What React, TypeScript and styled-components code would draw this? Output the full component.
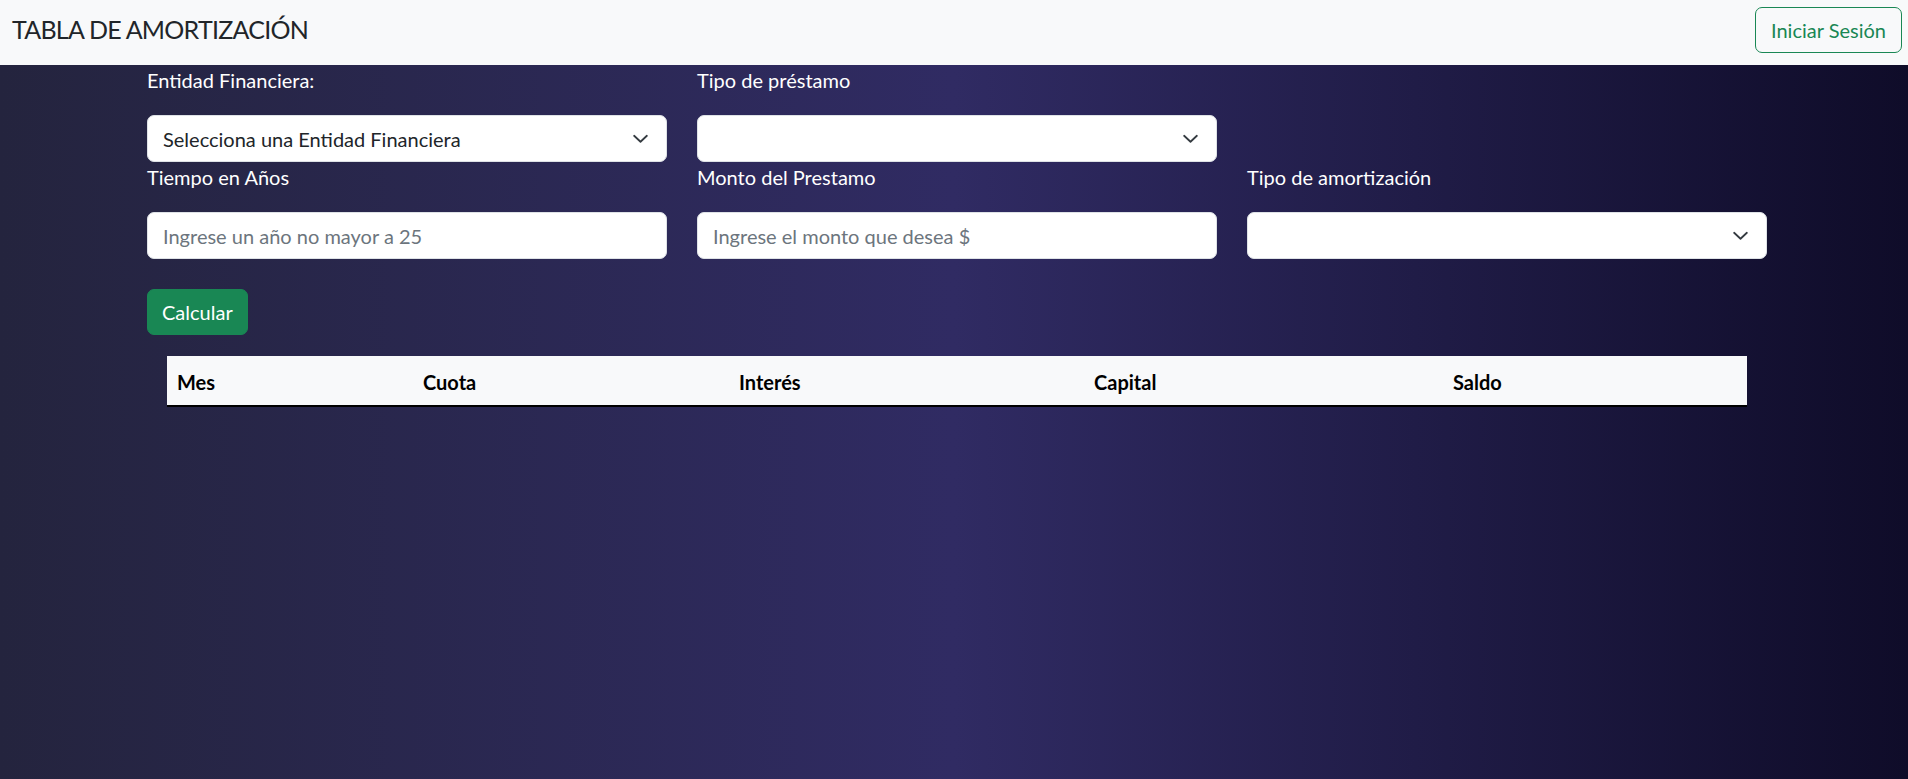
import React from "react";
import styled, { createGlobalStyle } from "styled-components";

const GlobalStyle = createGlobalStyle`
  html, body { margin: 0; padding: 0; }
  body {
    font-family: Lato, "Noto Sans", "Liberation Sans", sans-serif;
    font-size: 20px;
    line-height: 1.5;
    color: #212529;
    background: #0f0c29;
  }
  * { box-sizing: border-box; }
`;

const Navbar = styled.header`
  height: 65px;
  background: #f8f9fa;
  display: flex;
  align-items: center;
  justify-content: space-between;
  padding: 0 6px 5px 12px;
`;

const Brand = styled.div`
  font-size: 25px;
  line-height: 1.5;
  letter-spacing: -0.75px;
  color: #212529;
`;

const OutlineButton = styled.button`
  height: 46px;
  padding: 0 15px;
  border: 1px solid #198754;
  border-radius: 7px;
  background: transparent;
  color: #198754;
  font-family: inherit;
  font-size: 20px;
`;

const Main = styled.main`
  min-height: 714px;
  background: linear-gradient(to right, #24243e, #302b63, #0f0c29);
`;

const Container = styled.div`
  width: 1620px;
  margin-left: 147px;
`;

const Row = styled.div`
  display: grid;
  grid-template-columns: repeat(3, 520px);
  column-gap: 30px;
`;

const Field = styled.div`
  display: flex;
  flex-direction: column;
`;

const Label = styled.label`
  color: #ffffff;
  line-height: 30px;
  height: 30px;
  margin-bottom: 20px;
`;

const Control = styled.div<{ $placeholder?: boolean }>`
  height: 47px;
  background: #ffffff;
  border: 1px solid #dee2e6;
  border-radius: 7px;
  padding: 0 15px;
  display: flex;
  align-items: center;
  justify-content: space-between;
  color: ${(p) => (p.$placeholder ? "#6c757d" : "#212529")};
`;

const Chevron = styled.svg`
  width: 17px;
  height: 13px;
  flex: none;
  margin-right: 2px;
`;

const PrimaryButton = styled.button`
  margin-top: 30px;
  height: 46px;
  padding: 0 14px;
  border: 1px solid #198754;
  border-radius: 7px;
  background: #198754;
  color: #ffffff;
  font-family: inherit;
  font-size: 20px;
`;

const Table = styled.table`
  margin: 21px 0 0 20px;
  width: 1580px;
  border-collapse: collapse;
  background: #f8f9fa;
`;

const Th = styled.th<{ $w: number }>`
  width: ${(p) => p.$w}px;
  text-align: left;
  font-weight: 700;
  color: #000000;
  padding: 12px 10px 9px;
  line-height: 28px;
  border-bottom: 2px solid #000000;
`;

const ChevronIcon = () => (
  <Chevron viewBox="0 0 16 12" preserveAspectRatio="none">
    <path
      fill="none"
      stroke="#343a40"
      strokeLinecap="round"
      strokeLinejoin="round"
      strokeWidth="1.7"
      d="m2 3.5 6 5.5 6-5.5"
    />
  </Chevron>
);

const Select = ({ value }: { value?: string }) => (
  <Control>
    <span>{value ?? ""}</span>
    <ChevronIcon />
  </Control>
);

const Input = ({ placeholder }: { placeholder: string }) => (
  <Control $placeholder>
    <span>{placeholder}</span>
  </Control>
);

const columns: [string, number][] = [
  ["Mes", 246],
  ["Cuota", 316],
  ["Interés", 355],
  ["Capital", 359],
  ["Saldo", 304],
];

export default function App() {
  return (
    <>
      <GlobalStyle />
      <Navbar>
        <Brand>TABLA DE AMORTIZACIÓN</Brand>
        <OutlineButton>Iniciar Sesión</OutlineButton>
      </Navbar>
      <Main>
        <Container>
          <Row>
            <Field>
              <Label>Entidad Financiera:</Label>
              <Select value="Selecciona una Entidad Financiera" />
            </Field>
            <Field>
              <Label>Tipo de préstamo</Label>
              <Select />
            </Field>
          </Row>
          <Row>
            <Field>
              <Label>Tiempo en Años</Label>
              <Input placeholder="Ingrese un año no mayor a 25" />
            </Field>
            <Field>
              <Label>Monto del Prestamo</Label>
              <Input placeholder="Ingrese el monto que desea $" />
            </Field>
            <Field>
              <Label>Tipo de amortización</Label>
              <Select />
            </Field>
          </Row>
          <PrimaryButton>Calcular</PrimaryButton>
          <Table>
            <thead>
              <tr>
                {columns.map(([name, w]) => (
                  <Th key={name} $w={w}>
                    {name}
                  </Th>
                ))}
              </tr>
            </thead>
          </Table>
        </Container>
      </Main>
    </>
  );
}
